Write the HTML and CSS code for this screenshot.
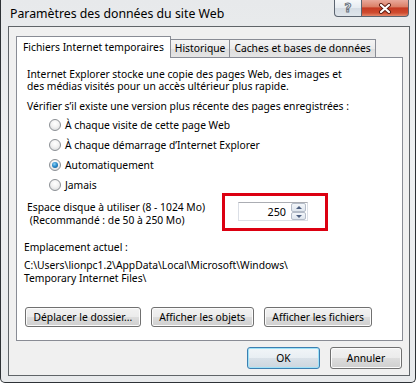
FILE: index.html
```html
<!DOCTYPE html>
<html lang="fr">
<head>
<meta charset="utf-8">
<title>Paramètres des données du site Web</title>
<link rel="stylesheet" href="styles.css">
</head>
<body>
<div class="window">
  <div class="titlebar">
    <span class="title">Paramètres des données du site Web</span>
    <div class="caption-btns">
      <span class="cap help">?</span>
      <span class="cap close">
        <svg width="14" height="11" viewBox="0 0 14 11">
          <path d="M3 2 L11 9 M11 2 L3 9" stroke="#5a1a10" stroke-width="4" stroke-linecap="round"/>
          <path d="M3 2 L11 9 M11 2 L3 9" stroke="#ffffff" stroke-width="2.2" stroke-linecap="round"/>
        </svg>
      </span>
    </div>
  </div>
  <div class="client">
    <div class="tabs">
      <div class="tab active">Fichiers Internet temporaires</div>
      <div class="tab">Historique</div>
      <div class="tab">Caches et bases de données</div>
    </div>
    <div class="panel">
      <p class="intro">Internet Explorer stocke une copie des pages Web, des images et<br>des médias visités pour un accès ultérieur plus rapide.</p>
      <p class="check">Vérifier s’il existe une version plus récente des pages enregistrées :</p>
      <ul class="radios">
        <li><span class="radio"></span>À chaque visite de cette page Web</li>
        <li><span class="radio"></span>À chaque démarrage d’Internet Explorer</li>
        <li><span class="radio checked"></span>Automatiquement</li>
        <li><span class="radio"></span>Jamais</li>
      </ul>
      <div class="disk">
        <div class="disk-label">Espace disque à utiliser (8 - 1024 Mo)<br>&nbsp;(Recommandé : de 50 à 250 Mo)</div>
        <div class="spin">
          <span class="val">250</span>
          <span class="arrows"><span class="arrow up"></span><span class="arrow down"></span></span>
          <span class="highlight"></span>
        </div>
      </div>
      <p class="loc-label">Emplacement actuel :</p>
      <p class="loc">C:\Users\lionpc1.2\AppData\Local\Microsoft\Windows\<br>Temporary Internet Files\</p>
      <div class="actions">
        <button class="btn">Déplacer le dossier...</button>
        <button class="btn">Afficher les objets</button>
        <button class="btn">Afficher les fichiers</button>
      </div>
    </div>
    <div class="footer">
      <button class="btn default">OK</button>
      <button class="btn">Annuler</button>
    </div>
  </div>
</div>
</body>
</html>
```
FILE: styles.css
```css
html, body {
  margin: 0;
  padding: 0;
  background: #ffffff;
}
body {
  font-family: "Noto Sans", "Open Sans", sans-serif;
  font-size: 10.3px;
  color: #000;
}
.window {
  width: 416px;
  height: 383px;
  box-sizing: border-box;
  display: flex;
  flex-direction: column;
  border: 1px solid #2e3236;
  border-top: none;
  border-radius: 0 0 5px 5px;
  padding: 0 5px 6px 7px;
  background: linear-gradient(180deg, #e7e9eb 0%, #eef0f1 40%, #e8eaec 100%);
}
.titlebar {
  height: 26px;
  display: flex;
  align-items: flex-start;
  flex: none;
}
.title {
  font-size: 12.3px;
  line-height: 27px;
  margin-left: 2px;
  color: #000;
}
.caption-btns {
  margin-left: auto;
  margin-right: 1px;
  display: flex;
}
.cap {
  height: 17px;
  box-sizing: border-box;
  display: flex;
  align-items: center;
  justify-content: center;
  border: 1px solid #5b6470;
  border-top: none;
}
.help {
  width: 28px;
  border-radius: 0 0 0 4px;
  background: linear-gradient(180deg, #f6f8fa 0%, #e6ebf0 50%, #d5dce4 51%, #dfe5eb 100%);
  font-family: "DejaVu Sans", sans-serif;
  font-weight: bold;
  font-size: 12px;
  color: #f5f7f9;
  -webkit-text-stroke: 1px #6a7380;
}
.close {
  width: 47px;
  border-left: none;
  border-radius: 0 0 4px 0;
  background: linear-gradient(180deg, #e9a99b 0%, #db8068 42%, #c53a22 50%, #cf4c30 80%, #e4886b 100%);
}
.client {
  flex: 1;
  display: flex;
  flex-direction: column;
  border: 1px solid #5f6468;
  background: #f0f0f0;
  padding: 9px 6px 6px 7px;
}
.tabs {
  display: flex;
  align-items: flex-end;
  height: 21px;
  flex: none;
}
.tab {
  height: 17px;
  line-height: 17px;
  padding: 0 4px;
  border: 1px solid #898c95;
  border-bottom: none;
  margin-left: -1px;
  background: linear-gradient(180deg, #f4f4f4 0%, #ebebeb 50%, #dddddd 51%, #e5e5e5 100%);
  white-space: nowrap;
}
.tab.active {
  height: 21px;
  line-height: 20px;
  margin-left: 0;
  margin-bottom: -1px;
  padding: 0 6px;
  background: #fff;
  position: relative;
  z-index: 1;
}
.panel {
  flex: 1;
  display: flex;
  flex-direction: column;
  border: 1px solid #898c95;
  background: #fff;
  padding: 10px 8px 0 7px;
}
.panel p {
  margin: 0;
}
.intro {
  line-height: 12px;
  margin-left: 3px !important;
}
.check {
  line-height: 12px;
  margin: 8px 0 0 3px !important;
}
.radios {
  list-style: none;
  margin: 3px 0 0 25px;
  padding: 0;
}
.radios li {
  height: 20px;
  line-height: 20px;
  display: flex;
  align-items: center;
}
.radio {
  width: 12px;
  height: 12px;
  box-sizing: border-box;
  border-radius: 50%;
  border: 1px solid #8b8f94;
  background: radial-gradient(circle at 50% 35%, #ffffff 0%, #f2f2f2 45%, #d2d4d6 100%);
  margin-right: 4px;
  position: relative;
}
.radio.checked::after {
  content: "";
  position: absolute;
  left: 2px;
  top: 2px;
  width: 6px;
  height: 6px;
  border-radius: 50%;
  background: radial-gradient(circle at 40% 35%, #8fd3f5 0%, #2b8ccc 45%, #0c4d86 100%);
}
.disk {
  display: flex;
  align-items: flex-start;
  margin: 6px 0 0 3px;
}
.disk-label {
  line-height: 13px;
}
.spin {
  position: relative;
  margin: 1px 86px 0 auto;
  width: 70px;
  height: 19px;
  box-sizing: border-box;
  display: flex;
  border: 1px solid #dbdfe6;
  border-top-color: #abadb3;
  background: #fff;
}
.val {
  flex: 1;
  text-align: right;
  padding-right: 5px;
  line-height: 17px;
  font-size: 10.8px;
}
.arrows {
  width: 15px;
  display: flex;
  flex-direction: column;
  margin: 0 1px 0 0;
}
.arrow {
  flex: 1;
  box-sizing: border-box;
  border: 1px solid #b4bcc8;
  border-radius: 2px;
  background: linear-gradient(180deg, #f3f6fa 0%, #dfe6ee 100%);
  position: relative;
}
.arrow::after {
  content: "";
  position: absolute;
  left: 4px;
  top: 2px;
  border-left: 3px solid transparent;
  border-right: 3px solid transparent;
}
.arrow.up::after {
  border-bottom: 3px solid #4c5f80;
}
.arrow.down::after {
  border-top: 3px solid #4c5f80;
}
.highlight {
  position: absolute;
  left: -17px;
  top: -10px;
  width: 106px;
  height: 38px;
  box-sizing: border-box;
  border: 3px solid #dc0011;
  pointer-events: none;
}
.loc-label {
  line-height: 13px;
  margin-top: 14px !important;
}
.loc {
  line-height: 13px;
  margin-top: 5px !important;
}
.actions {
  display: flex;
  gap: 10px;
  margin: 22px 0 0 1px;
}
.btn {
  font-family: "Noto Sans", "Open Sans", sans-serif;
  font-size: 10.3px;
  color: #000;
  height: 20px;
  padding: 0 7.5px;
  border: 1px solid #707070;
  border-radius: 3px;
  background: linear-gradient(180deg, #f2f2f2 0%, #ebebeb 50%, #dddddd 51%, #cfcfcf 100%);
  box-shadow: inset 0 0 0 1px #fbfbfb;
  white-space: nowrap;
}
.footer {
  display: flex;
  justify-content: flex-end;
  gap: 10px;
  margin-top: 6px;
  padding-right: 1px;
  flex: none;
}
.footer .btn {
  height: 22px;
  width: 72px;
}
.btn.default {
  width: 73px;
  border-color: #3c7fb1;
  box-shadow: inset 0 0 0 1px #9fe2f8;
  background: linear-gradient(180deg, #f1f5f8 0%, #e8eef3 50%, #d9e1e8 51%, #cdd6de 100%);
}
```
